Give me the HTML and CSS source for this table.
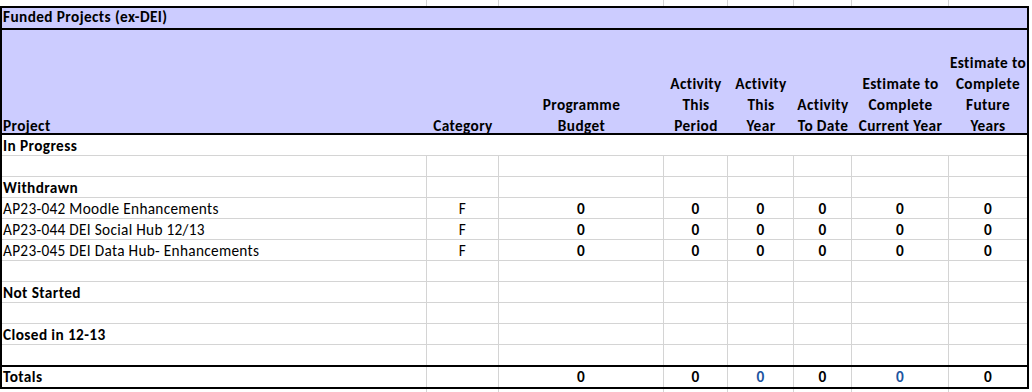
FILE: index.html
```html
<!DOCTYPE html>
<html lang="en">
<head>
<meta charset="utf-8">
<title>Funded Projects (ex-DEI)</title>
<link rel="stylesheet" href="styles.css">
</head>
<body>
<div class="sheet">
  <div class="strip strip-top cols">
    <span></span><span></span><span></span><span></span><span></span><span></span><span></span><span></span>
  </div>
  <div class="report">
    <div class="title">Funded Projects (ex-DEI)</div>
    <div class="cols head">
      <div class="hc hc-left"><span>Project</span></div>
      <div class="hc"><span>Category</span></div>
      <div class="hc"><span>Programme<br>Budget</span></div>
      <div class="hc"><span>Activity<br>This<br>Period</span></div>
      <div class="hc"><span>Activity<br>This<br>Year</span></div>
      <div class="hc"><span>Activity<br>To Date</span></div>
      <div class="hc"><span>Estimate to<br>Complete<br>Current Year</span></div>
      <div class="hc"><span>Estimate to<br>Complete<br>Future<br>Years</span></div>
    </div>

    <div class="row plain"><div class="cell label bold">In Progress</div></div>

    <div class="row cols"><div class="cell"></div><div class="cell"></div><div class="cell"></div><div class="cell"></div><div class="cell"></div><div class="cell"></div><div class="cell"></div><div class="cell"></div></div>

    <div class="row cols"><div class="cell label bold">Withdrawn</div><div class="cell"></div><div class="cell"></div><div class="cell"></div><div class="cell"></div><div class="cell"></div><div class="cell"></div><div class="cell"></div></div>

    <div class="row cols">
      <div class="cell label">AP23-042 Moodle Enhancements</div><div class="cell center">F</div>
      <div class="cell num">0</div><div class="cell num">0</div><div class="cell num">0</div><div class="cell num">0</div><div class="cell num">0</div><div class="cell num">0</div>
    </div>
    <div class="row cols">
      <div class="cell label">AP23-044 DEI Social Hub 12/13</div><div class="cell center">F</div>
      <div class="cell num">0</div><div class="cell num">0</div><div class="cell num">0</div><div class="cell num">0</div><div class="cell num">0</div><div class="cell num">0</div>
    </div>
    <div class="row cols">
      <div class="cell label">AP23-045 DEI Data Hub- Enhancements</div><div class="cell center">F</div>
      <div class="cell num">0</div><div class="cell num">0</div><div class="cell num">0</div><div class="cell num">0</div><div class="cell num">0</div><div class="cell num">0</div>
    </div>

    <div class="row cols"><div class="cell"></div><div class="cell"></div><div class="cell"></div><div class="cell"></div><div class="cell"></div><div class="cell"></div><div class="cell"></div><div class="cell"></div></div>

    <div class="row cols"><div class="cell label bold">Not Started</div><div class="cell"></div><div class="cell"></div><div class="cell"></div><div class="cell"></div><div class="cell"></div><div class="cell"></div><div class="cell"></div></div>

    <div class="row cols"><div class="cell"></div><div class="cell"></div><div class="cell"></div><div class="cell"></div><div class="cell"></div><div class="cell"></div><div class="cell"></div><div class="cell"></div></div>

    <div class="row cols"><div class="cell label bold">Closed in 12-13</div><div class="cell"></div><div class="cell"></div><div class="cell"></div><div class="cell"></div><div class="cell"></div><div class="cell"></div><div class="cell"></div></div>

    <div class="row cols last"><div class="cell"></div><div class="cell"></div><div class="cell"></div><div class="cell"></div><div class="cell"></div><div class="cell"></div><div class="cell"></div><div class="cell"></div></div>

    <div class="row cols totals">
      <div class="cell label bold">Totals</div><div class="cell"></div>
      <div class="cell num">0</div><div class="cell num">0</div><div class="cell num blue">0</div><div class="cell num">0</div><div class="cell num blue">0</div><div class="cell num">0</div>
    </div>
  </div>
  <div class="strip strip-bottom cols">
    <span></span><span></span><span></span><span></span><span></span><span></span><span></span><span></span>
  </div>
</div>
</body>
</html>
```

FILE: styles.css
```css
* {
  box-sizing: border-box;
}

html, body {
  margin: 0;
  padding: 0;
  background: #ffffff;
}

body {
  font-family: Carlito, Lato, "Liberation Sans", sans-serif;
  font-size: 15.3px;
  letter-spacing: 0.3px;
  color: #000000;
}

.sheet {
  width: 1032px;
}

.cols {
  display: grid;
  grid-template-columns: 425px 72px 165px 64px 66px 58px 97px 78px;
}

.strip {
  padding-left: 2px;
  width: 1029px;
}

.strip span {
  border-right: 1px solid #d4d4d4;
}

.strip span:last-child {
  border-right: none;
}

.strip-top {
  height: 6px;
}

.strip-bottom {
  height: 3px;
}

.report {
  width: 1029px;
  border: 2px solid #000000;
}

.title {
  height: 22px;
  line-height: 18px;
  padding: 0 0 0 1px;
  background: #ccccff;
  border-bottom: 2px solid #000000;
  font-weight: bold;
  letter-spacing: 0.4px;
  white-space: nowrap;
}

.head {
  height: 105px;
  background: #ccccff;
  border-bottom: 2px solid #000000;
}

.hc {
  display: flex;
  flex-direction: column;
  justify-content: flex-end;
  align-items: center;
  text-align: center;
  font-weight: bold;
  letter-spacing: 0.38px;
  line-height: 21px;
  white-space: nowrap;
}

.hc span {
  margin-bottom: -3px;
}

.hc-left {
  align-items: flex-start;
  text-align: left;
  padding-left: 1px;
}

.row {
  height: 21px;
  border-bottom: 1px solid #d4d4d4;
}

.row .cell {
  padding-top: 1px;
}

.row.last {
  border-bottom: none;
  height: 20px;
}

.row.totals {
  height: 22px;
  border-top: 2px solid #000000;
  border-bottom: none;
}

.row.totals .cell {
  padding-top: 0;
}

.cell {
  line-height: 20px;
  white-space: nowrap;
  border-right: 1px solid #d4d4d4;
}

.cell:last-child {
  border-right: none;
}

.plain .cell {
  border-right: none;
}

.label {
  padding-left: 1px;
}

.bold {
  font-weight: bold;
  letter-spacing: 0.4px;
}

.center {
  text-align: center;
}

.num {
  text-align: center;
  font-weight: bold;
}

.blue {
  color: #1d55a0;
}
```
